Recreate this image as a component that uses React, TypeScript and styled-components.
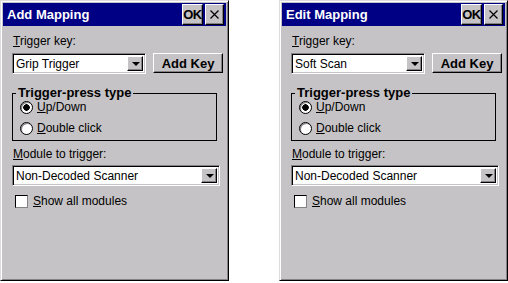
import styled, { createGlobalStyle } from "styled-components";

const Global = createGlobalStyle`
  html, body {
    margin: 0;
    padding: 0;
    background: #ffffff;
  }
  body {
    font-family: "Liberation Sans", Arial, sans-serif;
    font-size: 12px;
    color: #000;
  }
`;

const face = "#c6c3c6";
const shadow = "#848284";

interface DialogProps {
  title: string;
  triggerKey: string;
}

function Dialog({ title, triggerKey }: DialogProps) {
  return (
    <Frame>
      <TitleBar>
        <Title>{title}</Title>
        <CaptionButton $wide>OK</CaptionButton>
        <CaptionButton>
          <svg width="9" height="9" viewBox="0 0 9 9">
            <path d="M0.5 0.5 L8.5 8.5 M8.5 0.5 L0.5 8.5" stroke="#000" strokeWidth="1.2" />
          </svg>
        </CaptionButton>
      </TitleBar>
      <Body>
        <Label>
          <u>T</u>rigger key:
        </Label>
        <KeyRow>
          <Combo $width={134}>
            <ComboText>{triggerKey}</ComboText>
            <DropButton>
              <Arrow />
            </DropButton>
          </Combo>
          <PushButton>Add Key</PushButton>
        </KeyRow>
        <Group>
          <Legend>Trigger-press type</Legend>
          <RadioRow>
            <Radio $checked />
            <span>
              <u>U</u>p/Down
            </span>
          </RadioRow>
          <RadioRow>
            <Radio />
            <span>
              <u>D</u>ouble click
            </span>
          </RadioRow>
        </Group>
        <Label $top={6}>
          <u>M</u>odule to trigger:
        </Label>
        <Combo $width={208} $top={4}>
          <ComboText>Non-Decoded Scanner</ComboText>
          <DropButton>
            <Arrow />
          </DropButton>
        </Combo>
        <CheckRow>
          <Check />
          <span>
            <u>S</u>how all modules
          </span>
        </CheckRow>
      </Body>
    </Frame>
  );
}

export default function App() {
  return (
    <>
      <Global />
      <Page>
        <Dialog title="Add Mapping" triggerKey="Grip Trigger" />
        <Dialog title="Edit Mapping" triggerKey="Soft Scan" />
      </Page>
    </>
  );
}

const Page = styled.div`
  display: flex;
  gap: 50px;
`;

const Frame = styled.div`
  width: 229px;
  height: 281px;
  box-sizing: border-box;
  background: ${face};
  border-style: solid;
  border-width: 1px;
  border-color: #dedbde #000 #000 #dedbde;
  box-shadow: inset 1px 1px #fff, inset -1px -1px ${shadow};
  padding: 2px;
  display: flex;
  flex-direction: column;
`;

const TitleBar = styled.div`
  height: 23px;
  background: #000084;
  display: flex;
  align-items: center;
  padding: 0 2px 0 4px;
  gap: 2px;
`;

const Title = styled.div`
  flex: 1;
  color: #fff;
  font-weight: bold;
  font-size: 13px;
`;

const CaptionButton = styled.div<{ $wide?: boolean }>`
  width: ${(p) => (p.$wide ? 21 : 19)}px;
  height: 21px;
  box-sizing: border-box;
  background: ${face};
  border-style: solid;
  border-width: 1px;
  border-color: #fff #000 #000 #fff;
  box-shadow: inset -1px -1px ${shadow};
  display: flex;
  align-items: center;
  justify-content: center;
  font-weight: bold;
  font-size: 13px;
  letter-spacing: -0.5px;
`;

const Body = styled.div`
  padding: 8px 0 0 9px;
  display: flex;
  flex-direction: column;
`;

const Label = styled.div<{ $top?: number }>`
  margin-top: ${(p) => p.$top ?? 0}px;
  height: 14px;
  line-height: 14px;
  padding-left: 1px;
`;

const KeyRow = styled.div`
  display: flex;
  align-items: flex-start;
  margin-top: 5px;
  gap: 7px;
`;

const Combo = styled.div<{ $width: number; $top?: number }>`
  width: ${(p) => p.$width}px;
  height: 21px;
  margin-top: ${(p) => p.$top ?? 0}px;
  box-sizing: border-box;
  background: #fff;
  border-style: solid;
  border-width: 1px;
  border-color: ${shadow} #fff #fff ${shadow};
  box-shadow: inset 1px 1px #000, inset -1px -1px ${face};
  display: flex;
  align-items: center;
  padding: 2px;
`;

const ComboText = styled.div`
  flex: 1;
  padding-left: 1px;
  font-size: 12px;
  white-space: nowrap;
`;

const DropButton = styled.div`
  width: 16px;
  height: 15px;
  box-sizing: border-box;
  background: ${face};
  border-style: solid;
  border-width: 1px;
  border-color: #fff #000 #000 #fff;
  box-shadow: inset -1px -1px ${shadow};
  display: flex;
  align-items: center;
  justify-content: center;
`;

const Arrow = styled.div`
  width: 0;
  height: 0;
  border-left: 4px solid transparent;
  border-right: 4px solid transparent;
  border-top: 4px solid #000;
  margin-left: 1px;
`;

const PushButton = styled.div`
  width: 70px;
  height: 20px;
  box-sizing: border-box;
  background: ${face};
  border-style: solid;
  border-width: 1px;
  border-color: #fff #000 #000 #fff;
  box-shadow: inset -1px -1px ${shadow};
  display: flex;
  align-items: center;
  justify-content: center;
  font-weight: bold;
  font-size: 13px;
`;

const Group = styled.div`
  position: relative;
  width: 205px;
  height: 48px;
  box-sizing: border-box;
  margin-top: 19px;
  border: 1px solid #000;
  padding: 6px 0 0 7px;
  display: flex;
  flex-direction: column;
  gap: 7px;
`;

const Legend = styled.div`
  position: absolute;
  top: -9px;
  left: 3px;
  padding: 0 2px;
  background: ${face};
  font-weight: bold;
  font-size: 13px;
  line-height: 16px;
`;

const RadioRow = styled.div`
  display: flex;
  align-items: center;
  gap: 4px;
  height: 14px;
  line-height: 14px;
`;

const Radio = styled.div<{ $checked?: boolean }>`
  width: 13px;
  height: 13px;
  box-sizing: border-box;
  border-radius: 50%;
  background: ${(p) => (p.$checked ? "radial-gradient(circle, #000 0 3px, #fff 3.5px)" : "#fff")};
  border: 1px solid #000;
  box-shadow: inset 1px 1px ${shadow};
`;

const CheckRow = styled.div`
  display: flex;
  align-items: center;
  gap: 5px;
  margin-top: 8px;
  height: 14px;
  line-height: 14px;
  padding-left: 3px;
`;

const Check = styled.div`
  width: 13px;
  height: 13px;
  box-sizing: border-box;
  background: #fff;
  border-style: solid;
  border-width: 1px;
  border-color: #000 ${shadow} ${shadow} #000;
`;
